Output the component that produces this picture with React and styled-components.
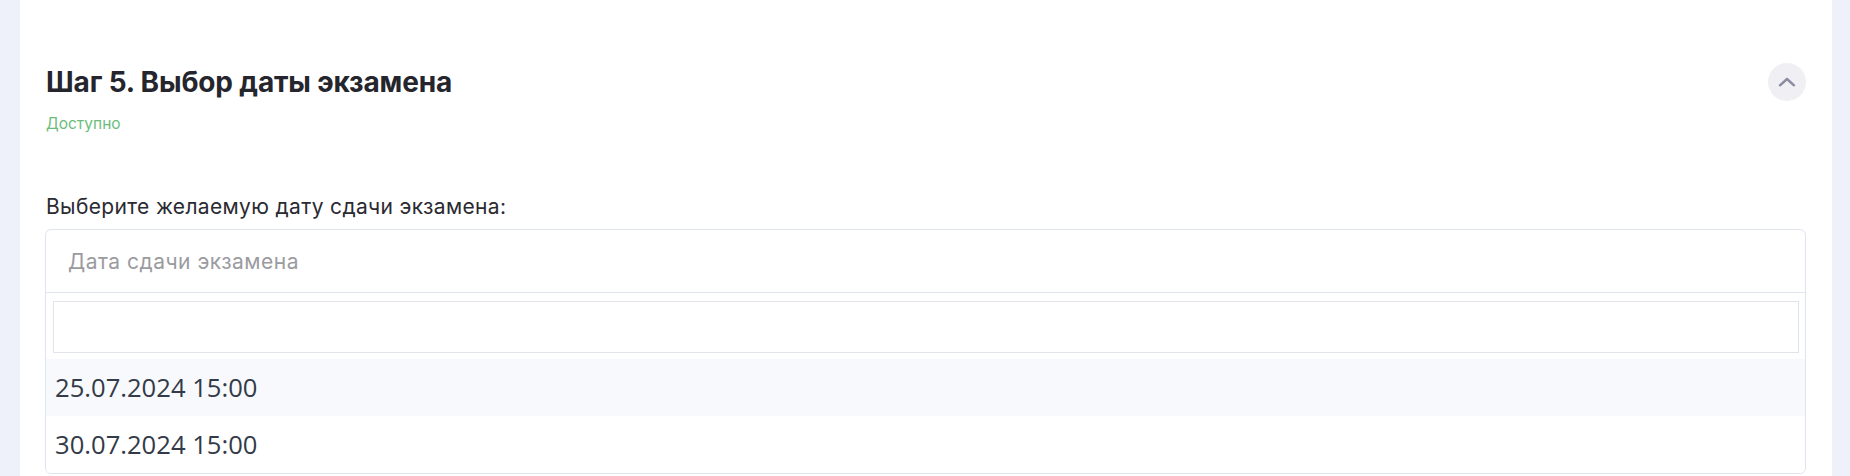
import React from "react";
import styled, { createGlobalStyle } from "styled-components";

const Global = createGlobalStyle`
  html, body { margin: 0; padding: 0; }
  body {
    background: #eef1fa;
    font-family: Inter, "Noto Sans", sans-serif;
    overflow: hidden;
  }
`;

const Page = styled.div`
  padding: 0 18px 0 20px;
`;

const Card = styled.section`
  background: #ffffff;
  padding: 63px 26px 24px 25px;
`;

const HeaderRow = styled.div`
  display: flex;
  align-items: center;
  justify-content: space-between;
  height: 38px;
`;

const Title = styled.h2`
  margin: 0 0 0 1px;
  font-family: Inter, sans-serif;
  font-weight: 700;
  font-size: 28px;
  letter-spacing: -0.15px;
  color: #25252d;
`;

const ToggleButton = styled.button`
  width: 38px;
  height: 38px;
  border-radius: 50%;
  border: none;
  background: #efeff4;
  display: flex;
  align-items: center;
  justify-content: center;
  padding: 0;
  cursor: pointer;
`;

const Status = styled.div`
  margin: 13px 0 0 1px;
  font-family: Inter, sans-serif;
  font-size: 15.5px;
  color: ${(p) => p.$color};
`;

const Label = styled.div`
  margin: 61px 0 10px 1px;
  font-family: Inter, sans-serif;
  font-size: 21px;
  letter-spacing: 0.35px;
  color: #2a2a31;
`;

const SelectBox = styled.div`
  border: 1px solid #dfe4ee;
  border-radius: 6px;
  overflow: hidden;
  background: #fff;
`;

const SelectHead = styled.div`
  height: 62px;
  display: flex;
  align-items: center;
  padding: 0 22px;
  border-bottom: 1px solid #dfe4ee;
  font-family: Inter, sans-serif;
  font-size: 21px;
  letter-spacing: 0.5px;
  color: #9b9b9f;
`;

const SearchWrap = styled.div`
  padding: 8px 6px 6px 7px;
`;

const SearchInput = styled.input`
  display: block;
  width: 100%;
  box-sizing: border-box;
  height: 52px;
  border: 1px solid #e1e4ea;
  border-radius: 0;
  outline: none;
  font-size: 20px;
  padding: 0 10px;
`;

const Option = styled.div`
  padding: 12px 9px;
  line-height: 33px;
  font-family: "Open Sans", sans-serif;
  font-size: 25.6px;
  color: #333a48;
  background: ${(p) => (p.$active ? "#f7f9fc" : "#ffffff")};
`;

const dates = ["25.07.2024 15:00", "30.07.2024 15:00"];

export default function App() {
  return (
    <>
      <Global />
      <Page>
        <Card>
          <HeaderRow>
            <Title>Шаг 5. Выбор даты экзамена</Title>
            <ToggleButton aria-label="Свернуть">
              <svg width="18" height="10" viewBox="0 0 18 10" fill="none">
                <path
                  d="M2 8.3L9 2L16 8.3"
                  stroke="#8a8aa2"
                  strokeWidth="2.4"
                  strokeLinecap="round"
                  strokeLinejoin="round"
                />
              </svg>
            </ToggleButton>
          </HeaderRow>
          <Status $color="#6bbd7b">Доступно</Status>
          <Label>Выберите желаемую дату сдачи экзамена:</Label>
          <SelectBox>
            <SelectHead>Дата сдачи экзамена</SelectHead>
            <SearchWrap>
              <SearchInput type="text" />
            </SearchWrap>
            {dates.map((d, i) => (
              <Option key={d} $active={i === 0}>
                {d}
              </Option>
            ))}
          </SelectBox>
        </Card>
      </Page>
    </>
  );
}
